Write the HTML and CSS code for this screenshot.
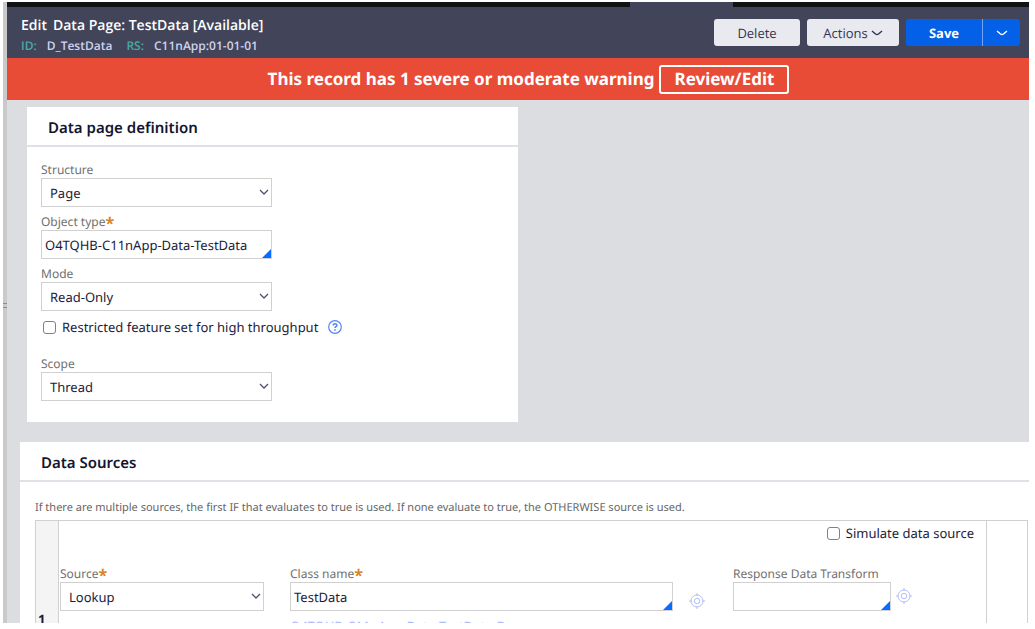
FILE: index.html
```html
<!DOCTYPE html>
<html lang="en">
<head>
<meta charset="utf-8">
<title>Edit Data Page: TestData</title>
<link rel="stylesheet" href="styles.css">
</head>
<body>
<div class="app">
  <div class="splitter"><span class="grip"></span></div>
  <div class="main">
    <div class="tabstrip"><span class="tab-active"></span></div>
    <header class="header">
      <div class="titles">
        <h1 class="title"><span>Edit</span><span>Data Page: TestData [Available]</span></h1>
        <div class="meta"><span class="key">ID:</span><span>D_TestData</span><span class="key key-rs">RS:</span><span>C11nApp:01-01-01</span></div>
      </div>
      <div class="actions">
        <button class="btn" type="button">Delete</button>
        <button class="btn btn-menu" type="button">Actions <svg class="caret" viewBox="0 0 12 6"><path d="M1 1L4.500 4Q6 5 7.500 4L11 1"/></svg></button>
        <div class="split">
          <button class="btn-save" type="button">Save</button>
          <button class="btn-more" type="button" aria-label="More save options"><svg class="caret" viewBox="0 0 12 6"><path d="M1 1L4.500 4Q6 5 7.500 4L11 1"/></svg></button>
        </div>
      </div>
    </header>
    <div class="banner"><span>This record has 1 severe or moderate warning</span><button class="btn-review" type="button">Review/Edit</button></div>
    <main class="content">
      <section class="card card-definition">
        <h2 class="card-title">Data page definition</h2>
        <div class="fields">
          <div class="field">
            <label for="structure">Structure</label>
            <div class="control control-select"><select id="structure"><option>Page</option></select><svg class="chevron" viewBox="0 0 10 6"><path d="M1 1l4 4 4-4"/></svg></div>
          </div>
          <div class="field">
            <label for="object">Object type<span class="req">*</span></label>
            <div class="control control-text"><input id="object" type="text" value="O4TQHB-C11nApp-Data-TestData"></div>
          </div>
          <div class="field">
            <label for="mode">Mode</label>
            <div class="control control-select"><select id="mode"><option>Read-Only</option></select><svg class="chevron" viewBox="0 0 10 6"><path d="M1 1l4 4 4-4"/></svg></div>
          </div>
          <div class="check-row">
            <input class="check" id="restricted" type="checkbox"><label for="restricted">Restricted feature set for high throughput</label>
            <svg class="help" viewBox="0 0 14 14"><circle cx="7" cy="7" r="6.300"/><path class="help-mark" d="M5.200 5.600c0-2.400 3.600-2.400 3.600-.2 0 1.300-1.800 1.300-1.800 2.700M7 9.300v1.500"/></svg>
          </div>
          <div class="field">
            <label for="scope">Scope</label>
            <div class="control control-select"><select id="scope"><option>Thread</option></select><svg class="chevron" viewBox="0 0 10 6"><path d="M1 1l4 4 4-4"/></svg></div>
          </div>
        </div>
      </section>
      <section class="card card-sources">
        <h2 class="card-title">Data Sources</h2>
        <p class="hint">If there are multiple sources, the first IF that evaluates to true is used. If none evaluate to true, the OTHERWISE source is used.</p>
        <div class="source-row">
          <div class="row-number">1</div>
          <div class="row-body">
            <div class="simulate"><input class="check" id="simulate" type="checkbox"><label for="simulate">Simulate data source</label></div>
            <div class="source-fields">
              <div class="field">
                <label for="source">Source<span class="req">*</span></label>
                <div class="control control-select"><select id="source"><option>Lookup</option></select><svg class="chevron" viewBox="0 0 10 6"><path d="M1 1l4 4 4-4"/></svg></div>
              </div>
              <div class="field field-class">
                <label for="class">Class name<span class="req">*</span></label>
                <div class="control control-text"><input id="class" type="text" value="TestData"></div>
                <a class="class-link" href="#">O4TQHB-C11nApp-Data-TestData-D</a>
              </div>
              <button class="target target-class" type="button" aria-label="Open class"><svg viewBox="0 0 16 16"><circle cx="8" cy="8" r="6"/><circle cx="8" cy="8" r="2.700"/><path d="M8 0v3M8 13v3M0 8h3M13 8h3"/></svg></button>
              <div class="field">
                <label for="transform">Response Data Transform</label>
                <div class="control control-text"><input id="transform" type="text"></div>
              </div>
              <button class="target target-transform" type="button" aria-label="Open transform"><svg viewBox="0 0 16 16"><circle cx="8" cy="8" r="6"/><circle cx="8" cy="8" r="2.700"/><path d="M8 0v3M8 13v3M0 8h3M13 8h3"/></svg></button>
            </div>
          </div>
          <div class="row-end"></div>
        </div>
      </section>
    </main>
  </div>
</div>
</body>
</html>
```

FILE: styles.css
```css
* { box-sizing: border-box; }
body {
  margin: 0;
  height: 100vh;
  padding: 2px 6px 6px 3px;
  overflow: hidden;
  background: #fff;
  color: #1b1c3a;
  font: 13px/20px "Noto Sans", "Open Sans", sans-serif;
  text-rendering: geometricPrecision;
}
button, input, select { font: inherit; color: inherit; margin: 0; text-rendering: inherit; }
svg { display: block; fill: none; stroke: currentColor; }
h1, h2, p { margin: 0; }

.app { display: flex; height: 100%; overflow: hidden; }
.splitter { flex: 0 0 4px; display: flex; align-items: center; background: #c9c9c9; }
.grip { width: 4px; height: 5px; margin-top: -14px; border: solid #8b8b8b; border-width: 1px 0; }
.main { flex: 1; min-width: 0; display: flex; flex-direction: column; background: #dcdde0; }

.tabstrip { flex: none; display: flex; height: 5px; background: #111214; }
.tab-active { width: 10%; margin-left: 61%; background: #424459; }

.header { flex: none; display: flex; justify-content: space-between; height: 51px; padding: 8px 9px 0 14px; background: #424459; font-family: "Open Sans", sans-serif; }
.titles { display: flex; flex-direction: column; padding-top: 1px; }
.title { display: flex; gap: 6px; color: #fff; font-size: 14px; line-height: 20px; font-weight: 600; }
.meta { display: flex; gap: 10px; color: #cdd3ee; font-size: 12px; line-height: 20px; font-weight: 600; }
.key { color: #4aa9a5; }
.key-rs { margin-left: 4px; }
.actions { display: flex; gap: 7px; padding-top: 4px; }
.actions button { height: 27px; padding: 0; border: 0; }
.actions .btn { width: 86px; border-radius: 3px; background: #e9e9f0; color: #34364f; }
.actions .btn-menu { display: flex; align-items: center; justify-content: center; gap: 3px; width: 92px; }
.caret { width: 12px; height: 6px; stroke-width: 1.5; }
.split { display: flex; color: #fff; }
.actions .btn-save { width: 77px; border-right: 1px solid #73a7f5; border-radius: 3px 0 0 3px; background: #0460e6; font-weight: 700; }
.actions .btn-more { display: flex; align-items: center; justify-content: center; width: 37px; border-radius: 0 3px 3px 0; background: #0460e6; }

.banner { flex: none; display: flex; align-items: center; justify-content: center; gap: 5px; height: 42px; padding-left: 21px; background: #e84c37; color: #fff; font-size: 17px; font-weight: 700; }
.btn-review { height: 29px; padding: 0 13px; border: 2px solid #fff; border-radius: 3px; background: transparent; line-height: 24px; }

.content { flex: 1; min-height: 0; overflow: hidden; padding: 7px 0 0 13px; }
.card { background: #fff; }
.card-title { font-size: 15px; line-height: 20px; font-weight: 600; border-bottom: 2px solid #e0e0e6; color: #14152f; }
.card-definition { width: 491px; margin-left: 7px; padding-bottom: 21px; }
.card-definition .card-title { padding: 11px 21px 7px; }
.fields { padding: 14px 14px 0; display: flex; flex-direction: column; gap: 6px; }
.field { display: flex; flex-direction: column; }
.fields .field { width: 231px; }
.field label { display: flex; height: 17px; line-height: 17px; font-size: 12px; color: #707070; white-space: nowrap; }
.req { color: #d98324; font-size: 16px; line-height: 20px; font-weight: 700; }
.control { position: relative; }
.control select, .control input { display: block; width: 100%; height: 29px; border: 1px solid #d0d0d0; outline: 0; border-radius: 0; background: #fff; }
.control select { appearance: none; padding: 0 24px 0 8px; }
.control input { padding: 0 3px; }
.chevron { position: absolute; right: 3px; top: 11px; width: 10px; height: 6px; color: #50516c; stroke-width: 1.3; pointer-events: none; }
.control-text::after { content: ""; position: absolute; right: 1px; bottom: 1px; border-style: solid; border-width: 0 0 9px 9px; border-color: transparent transparent #0a6cff; }
.check { appearance: none; flex: none; width: 13px; height: 13px; border: 1px solid #818181; border-radius: 3px; background: #fff; }
.check-row { display: flex; align-items: center; gap: 6px; height: 20px; padding-left: 2px; margin-bottom: 12px; }
.help { width: 14px; height: 14px; margin-left: 4px; color: #5486f4; stroke-width: 1.2; }
.help-mark { stroke-width: 1.6; }

.card-sources { margin-top: 20px; }
.card-sources .card-title { padding: 11px 21px 7px; }
.hint { padding: 17px 15px 3px; font-size: 11px; line-height: 18px; color: #666; white-space: nowrap; }
.source-row { display: grid; grid-template-columns: 23px minmax(0, 1fr) 41px; margin: 0 1px 0 15px; border: 1px solid #d0d0d0; }
.row-number { padding: 88px 2px 0; border-right: 1px solid #d0d0d0; background: #f4f4f4; font-weight: 700; }
.row-body { padding: 2px 12px 0 1px; }
.row-end { border-left: 1px solid #d0d0d0; }
.simulate { display: flex; align-items: center; justify-content: flex-end; gap: 6px; height: 20px; }
.source-fields { display: grid; grid-template-columns: 204px minmax(0, 1fr) 44px 158px 21px; margin: 22px 62px 0 0; }
.field-class { margin: 0 16px 0 26px; }
.class-link { margin-top: 5px; color: #a9b5f8; text-decoration: none; }
.target { width: 16px; height: 16px; padding: 0; border: 0; background: none; color: #b3bff8; }
.target svg { width: 16px; height: 16px; }
.target-class { margin-top: 28px; }
.target-transform { margin-top: 23px; justify-self: end; }
```
